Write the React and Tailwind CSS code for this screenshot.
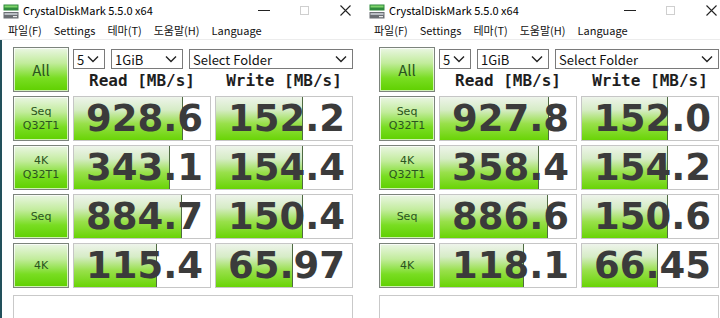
import React from 'react';

const WINDOWS = [
  {
    rows: [
      { label: ['Seq', 'Q32T1'], read: '928.6', readW: 109, write: '152.2', writeW: 87 },
      { label: ['4K', 'Q32T1'], read: '343.1', readW: 96, write: '154.4', writeW: 87 },
      { label: ['Seq'], read: '884.7', readW: 108, write: '150.4', writeW: 87 },
      { label: ['4K'], read: '115.4', readW: 83, write: '65.97', writeW: 77 },
    ],
  },
  {
    rows: [
      { label: ['Seq', 'Q32T1'], read: '927.8', readW: 109, write: '152.0', writeW: 86 },
      { label: ['4K', 'Q32T1'], read: '358.4', readW: 99, write: '154.2', writeW: 86 },
      { label: ['Seq'], read: '886.6', readW: 108, write: '150.6', writeW: 86 },
      { label: ['4K'], read: '118.1', readW: 84, write: '66.45', writeW: 76 },
    ],
  },
];

const uiFont = { fontFamily: '"Noto Sans CJK KR", "Noto Sans", sans-serif' };

function AppIcon() {
  return (
    <svg width="16" height="16" viewBox="0 0 16 16" className="shrink-0">
      <rect x="0.5" y="1.5" width="15" height="6" fill="#2f8a3c" />
      <rect x="1.5" y="2.5" width="13" height="2" fill="#7fd36b" />
      <rect x="0.5" y="9" width="15" height="6.5" fill="#6b6f74" />
      <rect x="1.5" y="10" width="13" height="2" fill="#b9bec4" />
      <rect x="10" y="13" width="4" height="1.2" fill="#e8e8e8" />
    </svg>
  );
}

function Chevron() {
  return (
    <svg width="12" height="8" viewBox="0 0 12 8" className="shrink-0">
      <polyline points="1,1.5 6,6.5 11,1.5" fill="none" stroke="#222" strokeWidth="1.4" />
    </svg>
  );
}

function Select({ width, value }) {
  return (
    <div
      className="h-[20px] flex items-center justify-between border border-[#7a7a7a] bg-white pl-[3px] pr-[5px] text-[13px] leading-none text-[#111]"
      style={{ width, ...uiFont }}
    >
      <span>{value}</span>
      <Chevron />
    </div>
  );
}

function GreenButton({ children, className = '' }) {
  return (
    <div
      className={`h-[45px] border border-[#7c847c] shadow-[inset_0_0_0_1px_rgba(255,255,255,0.7)] bg-[linear-gradient(to_bottom,#eaf6e3_0%,#c2ec9c_35%,#79dd22_70%,#5fd000_100%)] flex flex-col items-center justify-center text-[#2a5420] ${className}`}
    >
      {children}
    </div>
  );
}

function Cell({ value, fill }) {
  return (
    <div className="relative h-[45px] border border-[#c6c6c6] bg-white flex items-center justify-end overflow-hidden">
      <div
        className="absolute left-0 top-0 bottom-0 border-r border-[#4f6b42] bg-[linear-gradient(to_bottom,#eef4eb_0%,#d6ecc6_30%,#98e04a_62%,#69d406_100%)]"
        style={{ width: fill }}
      />
      <span
        className="relative pr-[7px] text-[37px] font-bold leading-none text-[#3b3b3b]"
        style={{ fontFamily: '"DejaVu Sans", Verdana, sans-serif' }}
      >
        {value}
      </span>
    </div>
  );
}

function Window({ data, edge }) {
  return (
    <div className="w-[366px] shrink-0 h-[318px] flex flex-col bg-white overflow-hidden">
      <div className="h-[21px] shrink-0 flex items-center pl-[3px] text-[11px] text-black" style={uiFont}>
        <AppIcon />
        <span className="ml-[4px] leading-none">CrystalDiskMark 5.5.0 x64</span>
        <div className="flex-1" />
        <div className="w-[41px] flex justify-center">
          <div className="w-[12px] h-px bg-[#222]" />
        </div>
        <div className="w-[41px] flex justify-center">
          <div className="w-[9px] h-[9px] border border-[#cfcfcf]" />
        </div>
        <div className="w-[41px] flex justify-center">
          <svg width="11" height="11" viewBox="0 0 11 11">
            <path d="M0.5 0.5 L10.5 10.5 M10.5 0.5 L0.5 10.5" stroke="#222" strokeWidth="1.1" />
          </svg>
        </div>
      </div>
      <div className="h-[19px] shrink-0 flex items-center pl-[8px] gap-[12px] text-[11px] leading-none text-[#111] border-b border-[#ececec]" style={uiFont}>
        <span>파일(F)</span>
        <span>Settings</span>
        <span>테마(T)</span>
        <span>도움말(H)</span>
        <span>Language</span>
      </div>
      <div className={`flex-1 pt-[7px] ${edge ? 'border-l-2 border-[#22505b] pl-[11px]' : 'pl-[13px]'}`}>
        <div className="grid grid-cols-[56px_138px_138px] gap-x-[4px] gap-y-[4px]">
          <GreenButton>
            <span className="text-[15px] leading-none" style={uiFont}>All</span>
          </GreenButton>
          <div className="col-span-2 flex flex-col">
            <div className="flex gap-[6px] mt-[2px]">
              <Select width={32} value="5" />
              <Select width={72} value="1GiB" />
              <Select width={164} value="Select Folder" />
            </div>
            <div
              className="flex-1 grid grid-cols-[138px_138px] gap-x-[4px] items-center text-[16px] font-bold leading-none text-[#1e1e1e]"
              style={{ fontFamily: '"DejaVu Sans Mono", "Liberation Mono", monospace' }}
            >
              <span className="text-center">Read [MB/s]</span>
              <span className="text-center">Write [MB/s]</span>
            </div>
          </div>
          {data.rows.map((r, i) => (
            <React.Fragment key={i}>
              <GreenButton className="gap-[3px]">
                {r.label.map((t) => (
                  <span key={t} className="text-[11px] leading-none" style={{ fontFamily: '"DejaVu Sans", sans-serif' }}>
                    {t}
                  </span>
                ))}
              </GreenButton>
              <Cell value={r.read} fill={r.readW} />
              <Cell value={r.write} fill={r.writeW} />
            </React.Fragment>
          ))}
        </div>
        <div className="mt-[7px] w-[340px] h-[40px] border border-[#c9c9c9] bg-white" />
      </div>
    </div>
  );
}

export default function App() {
  return (
    <div className="w-[720px] h-[318px] flex overflow-hidden bg-white">
      <Window data={WINDOWS[0]} edge />
      <Window data={WINDOWS[1]} />
    </div>
  );
}
